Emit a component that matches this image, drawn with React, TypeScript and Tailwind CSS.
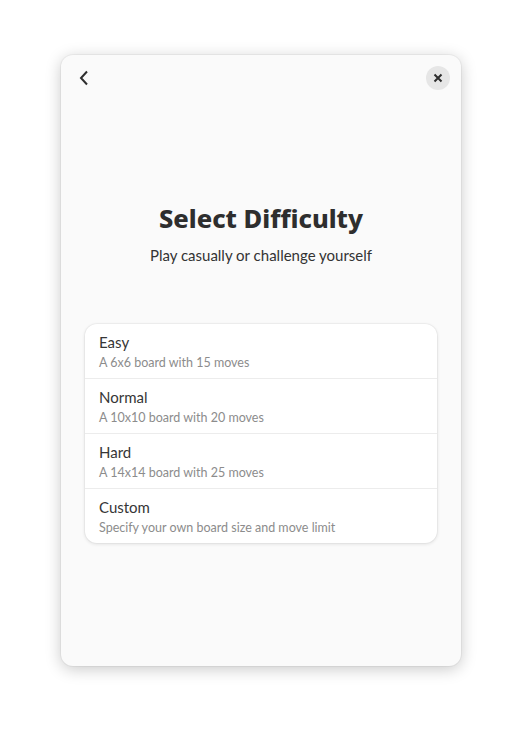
import React from 'react';

const levels = [
  { title: 'Easy', desc: 'A 6x6 board with 15 moves' },
  { title: 'Normal', desc: 'A 10x10 board with 20 moves' },
  { title: 'Hard', desc: 'A 14x14 board with 25 moves' },
  { title: 'Custom', desc: 'Specify your own board size and move limit' },
];

const App: React.FC = () => {
  return (
    <div className="min-h-[733px] w-[522px] bg-white pt-[55px] pl-[61px] font-['Lato',sans-serif]">
      <div className="w-[400px] h-[611px] rounded-[12px] bg-[#fafafa] shadow-[0_3px_16px_rgba(0,0,0,0.22),0_0_0_1px_rgba(0,0,0,0.04)] flex flex-col">
        {/* header */}
        <div className="h-[46px] flex items-center justify-between pl-[11px] pr-[11px]">
          <button className="w-[24px] h-[24px] flex items-center justify-center text-[#2e2e2e]">
            <svg width="10" height="16" viewBox="0 0 10 16" fill="none">
              <path d="M8 1.5 L2 8 L8 14.5" stroke="currentColor" strokeWidth="2" />
            </svg>
          </button>
          <button className="w-[24px] h-[24px] rounded-full bg-[#e6e6e6] flex items-center justify-center text-[#2e2e2e]">
            <svg width="10" height="10" viewBox="0 0 10 10" fill="none">
              <path d="M1.5 1.5 L8.5 8.5 M8.5 1.5 L1.5 8.5" stroke="currentColor" strokeWidth="2" />
            </svg>
          </button>
        </div>

        {/* status */}
        <div className="mt-[101px] flex flex-col items-center">
          <h1 className="font-['Noto_Sans',sans-serif] text-[25.5px] leading-[32px] font-extrabold text-[#2e2e2e]">Select Difficulty</h1>
          <p className="mt-[11px] text-[15px] leading-[20px] text-[#333]">Play casually or challenge yourself</p>
        </div>

        {/* list */}
        <div className="mt-[59px] mx-[24px] rounded-[12px] bg-white shadow-[0_0_0_1px_rgba(0,0,0,0.03),0_1px_3px_1px_rgba(0,0,0,0.07)] flex flex-col divide-y divide-[#ececec]">
          {levels.map((l) => (
            <div key={l.title} className="px-[14px] pt-[8px] pb-[6px] flex flex-col">
              <span className="text-[15px] leading-[20px] text-[#363636]">{l.title}</span>
              <span className="mt-[2px] text-[12.5px] leading-[18px] text-[#8c8c8c]">{l.desc}</span>
            </div>
          ))}
        </div>
      </div>
    </div>
  );
};

export default App;
